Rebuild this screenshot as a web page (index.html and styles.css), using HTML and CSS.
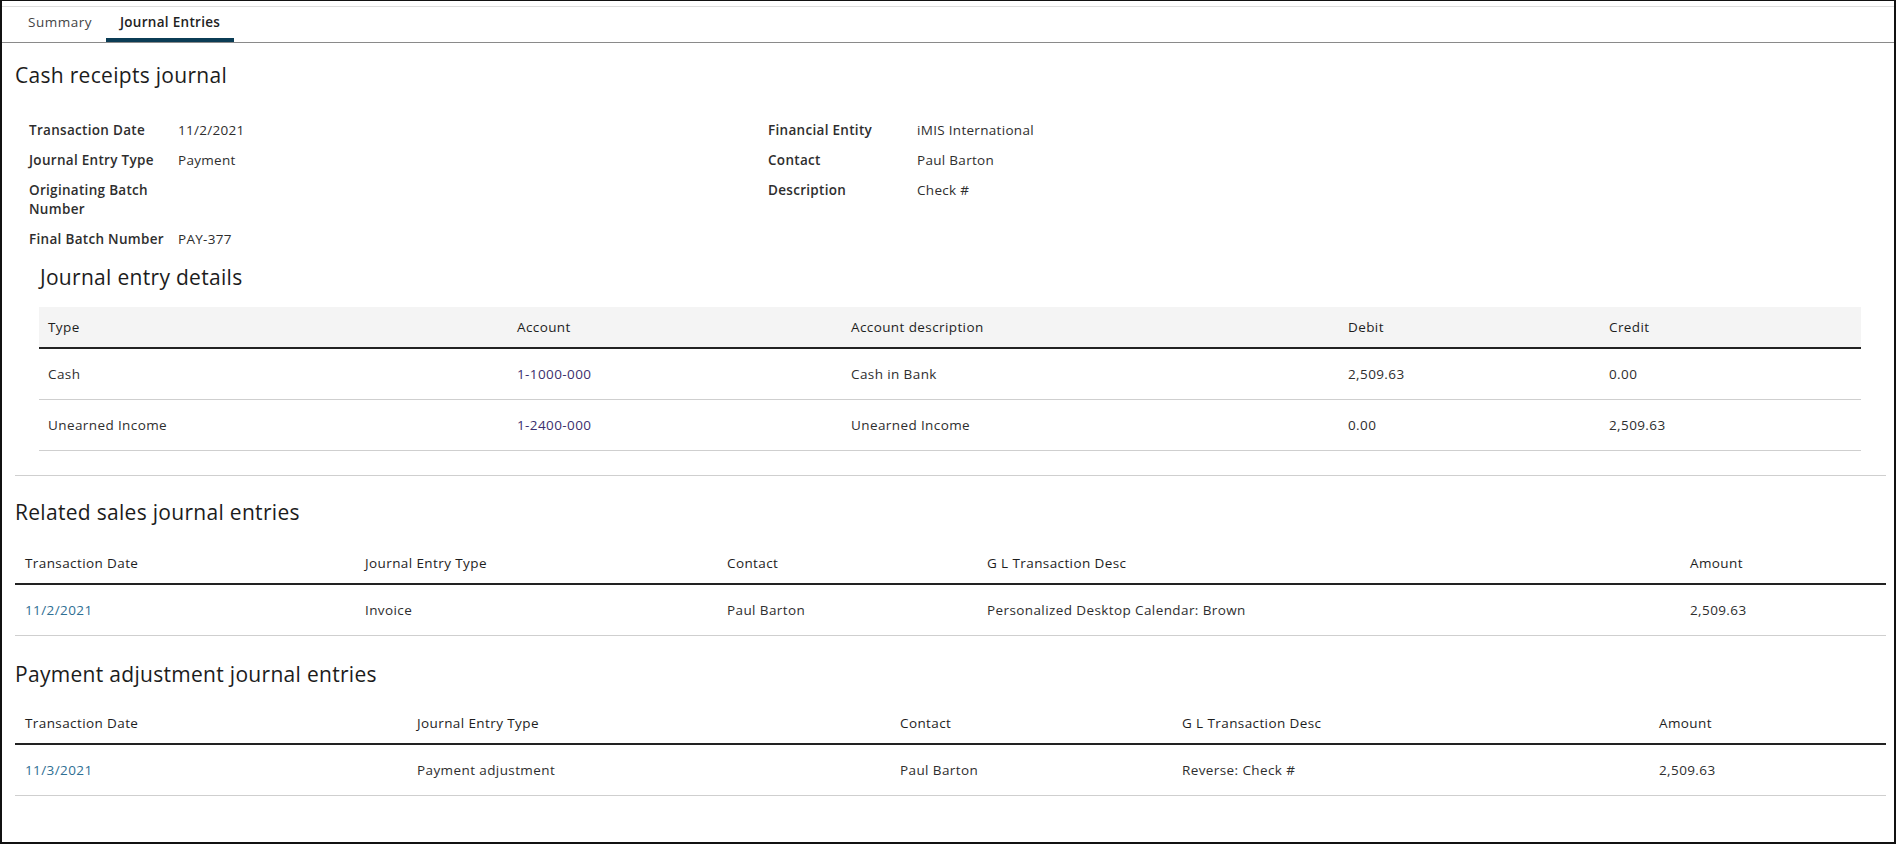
FILE: index.html
```html
<!DOCTYPE html>
<html lang="en">
<head>
  <meta charset="UTF-8" />
  <title>Journal Entries</title>
  <meta name="viewport" content="width=device-width, initial-scale=1" />
  <link rel="stylesheet" href="styles.css">
</head>
<body>
  <div class="frame">
    <!-- Tabs -->
    <nav class="tabs">
      <a class="tab" href="#">Summary</a>
      <a class="tab active" href="#">Journal Entries</a>
    </nav>

    <div class="content">
      <h1 class="page-title">Cash receipts journal</h1>

      <div class="details">
        <div class="detail-col">
          <div class="detail-row"><span class="detail-label">Transaction Date</span><span class="detail-value">11/2/2021</span></div>
          <div class="detail-row"><span class="detail-label">Journal Entry Type</span><span class="detail-value">Payment</span></div>
          <div class="detail-row"><span class="detail-label">Originating Batch Number</span><span class="detail-value"></span></div>
          <div class="detail-row"><span class="detail-label">Final Batch Number</span><span class="detail-value">PAY-377</span></div>
        </div>
        <div class="detail-col">
          <div class="detail-row"><span class="detail-label">Financial Entity</span><span class="detail-value">iMIS International</span></div>
          <div class="detail-row"><span class="detail-label">Contact</span><span class="detail-value">Paul Barton</span></div>
          <div class="detail-row"><span class="detail-label">Description</span><span class="detail-value">Check #</span></div>
        </div>
      </div>

      <!-- Journal entry details -->
      <section class="entry-details">
        <h2 class="section-title">Journal entry details</h2>
        <table class="grid grid-shaded entries">
          <colgroup>
            <col class="c1"><col class="c2"><col class="c3"><col class="c4"><col class="c5">
          </colgroup>
          <thead>
            <tr><th>Type</th><th>Account</th><th>Account description</th><th>Debit</th><th>Credit</th></tr>
          </thead>
          <tbody>
            <tr><td>Cash</td><td><a class="account-link" href="#">1-1000-000</a></td><td>Cash in Bank</td><td>2,509.63</td><td>0.00</td></tr>
            <tr><td>Unearned Income</td><td><a class="account-link" href="#">1-2400-000</a></td><td>Unearned Income</td><td>0.00</td><td>2,509.63</td></tr>
          </tbody>
        </table>
      </section>

      <hr class="divider">

      <!-- Related sales -->
      <section class="related">
        <h2 class="section-title">Related sales journal entries</h2>
        <table class="grid sales">
          <colgroup>
            <col class="c1"><col class="c2"><col class="c3"><col class="c4"><col class="c5">
          </colgroup>
          <thead>
            <tr><th>Transaction Date</th><th>Journal Entry Type</th><th>Contact</th><th>G L Transaction Desc</th><th>Amount</th></tr>
          </thead>
          <tbody>
            <tr><td><a class="date-link" href="#">11/2/2021</a></td><td>Invoice</td><td>Paul Barton</td><td>Personalized Desktop Calendar: Brown</td><td>2,509.63</td></tr>
          </tbody>
        </table>
      </section>

      <!-- Payment adjustments -->
      <section class="related">
        <h2 class="section-title">Payment adjustment journal entries</h2>
        <table class="grid adjustments">
          <colgroup>
            <col class="c1"><col class="c2"><col class="c3"><col class="c4"><col class="c5">
          </colgroup>
          <thead>
            <tr><th>Transaction Date</th><th>Journal Entry Type</th><th>Contact</th><th>G L Transaction Desc</th><th>Amount</th></tr>
          </thead>
          <tbody>
            <tr><td><a class="date-link" href="#">11/3/2021</a></td><td>Payment adjustment</td><td>Paul Barton</td><td>Reverse: Check #</td><td>2,509.63</td></tr>
          </tbody>
        </table>
      </section>
    </div>
  </div>
</body>
</html>
```

FILE: styles.css
```css
html, body {
  margin: 0;
  padding: 0;
  background: #fff;
  font-family: 'Open Sans', 'Noto Sans', sans-serif;
  color: #2b2b2b;
}

.frame {
  box-sizing: border-box;
  width: 1896px;
  height: 844px;
  border-top: 1px solid #111;
  border-left: 2px solid #111;
  border-right: 2px solid #111;
  border-bottom: 2px solid #111;
  overflow: hidden;
}

/* Tabs */
.tabs {
  display: flex;
  margin-top: 5px;
  padding-left: 12px;
  border-top: 1px solid #ddd;
  border-bottom: 1px solid #8a8a8a;
}

.tab {
  display: block;
  padding: 0 14px;
  line-height: 31px;
  font-size: 13.5px;
  letter-spacing: 0.5px;
  color: #444;
  text-decoration: none;
  border-bottom: 4px solid transparent;
}

.tab.active {
  font-weight: 600;
  letter-spacing: 0.3px;
  color: #222;
  border-bottom-color: #0b3c55;
}

.content {
  padding: 0 8px 0 13px;
}

.page-title,
.section-title {
  margin: 0;
  font-size: 21px;
  line-height: 28px;
  font-weight: 400;
  color: #1c1c1c;
  letter-spacing: 0.3px;
}

.page-title {
  margin-top: 18px;
}

/* Detail list */
.details {
  display: grid;
  grid-template-columns: 739px 1fr;
  margin-top: 26px;
  padding-left: 14px;
}

.detail-row {
  display: flex;
  gap: 9px;
  padding: 6px 0 5px;
  font-size: 13.5px;
  line-height: 19px;
  letter-spacing: 0.3px;
}

.detail-label {
  width: 140px;
  flex-shrink: 0;
  font-weight: 600;
  color: #2e2e2e;
}

.detail-value {
  color: #2e2e2e;
}

/* Tables */
.entry-details {
  margin: 9px 25px 0 24px;
  padding-bottom: 24px;
}

.entry-details .section-title {
  margin-left: 1px;
  margin-bottom: 16px;
}

.grid {
  width: 100%;
  border-collapse: collapse;
  table-layout: fixed;
  font-size: 13.5px;
  letter-spacing: 0.4px;
}

.grid th {
  height: 40px;
  padding: 0 10px;
  text-align: left;
  font-weight: 400;
  color: #1e1e1e;
  border-bottom: 2px solid #222;
}

.grid td {
  height: 50px;
  padding: 0 10px;
  color: #2e2e2e;
  border-bottom: 1px solid #cfcfcf;
}

.grid-shaded th {
  background: #f4f4f4;
}

.grid-shaded th,
.grid-shaded td {
  padding: 0 9px;
}

.account-link {
  color: #3b2f6e;
  text-decoration: none;
}

.date-link {
  color: #2f6f93;
  text-decoration: none;
}

.entries .c1 { width: 469px; }
.entries .c2 { width: 334px; }
.entries .c3 { width: 497px; }
.entries .c4 { width: 261px; }

.sales .c1 { width: 340px; }
.sales .c2 { width: 362px; }
.sales .c3 { width: 260px; }
.sales .c4 { width: 703px; }

.adjustments .c1 { width: 392px; }
.adjustments .c2 { width: 483px; }
.adjustments .c3 { width: 282px; }
.adjustments .c4 { width: 477px; }

.divider {
  margin: 0;
  border: 0;
  border-top: 1px solid #cfcfcf;
}

.related {
  margin-top: 22px;
}

.related + .related {
  margin-top: 24px;
}

.related .section-title {
  margin-bottom: 17px;
}

.related + .related .section-title {
  margin-bottom: 15px;
}
```
